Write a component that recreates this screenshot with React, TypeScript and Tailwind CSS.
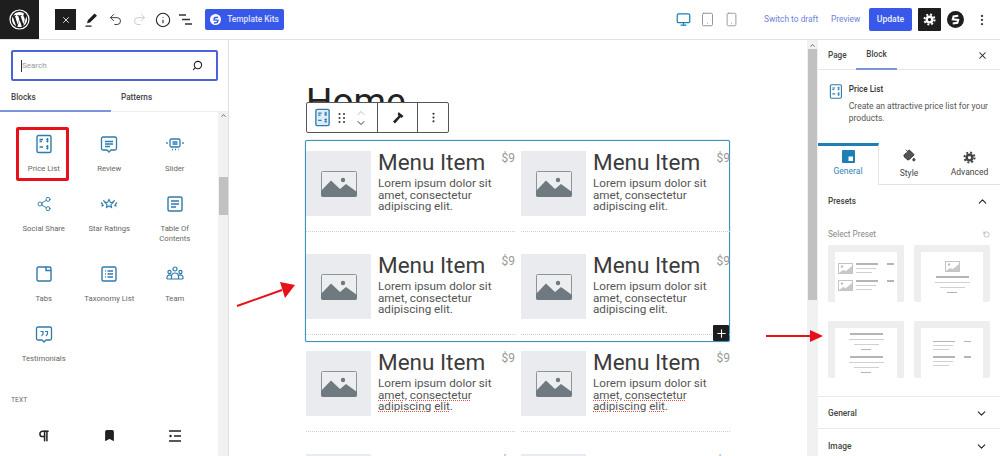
import React from "react";
import {
  Bookmark,
  ChevronDown,
  ChevronUp,
  EllipsisVertical,
  Info,
  Monitor,
  PaintBucket,
  Pilcrow,
  Plus,
  Redo2,
  RotateCcw,
  Search,
  Share2,
  Smartphone,
  Tablet,
  Undo2,
  X,
} from "lucide-react";

const BLUE = "#2f7bab";

const PriceIcon = ({ size = 20, fill = "none" }: { size?: number; fill?: string }) => (
  <svg width={size} height={size} viewBox="0 0 20 20" fill={fill} stroke={BLUE} strokeWidth="1.4">
    <rect x="3" y="1.500" width="14" height="17" rx="1.500" />
    <path d="M5.500 5.500h3.500M5.500 7.500h2.500M5.500 13h3.500" strokeWidth="1.300" />
    <path d="M13.500 4v4.500M12 5.200h2.600M12 7.200h2.600M13.500 11v4.500M12 12.200h2.600M12 14.200h2.600" strokeWidth="1.100" />
  </svg>
);

const ReviewIcon = () => (
  <svg width="20" height="20" viewBox="0 0 20 20" fill="none" stroke={BLUE} strokeWidth="1.300">
    <path d="M4 3h12a1.500 1.500 0 0 1 1.500 1.500v10a1.500 1.500 0 0 1-1.500 1.500h-4l-2 2-2-2H4a1.500 1.500 0 0 1-1.500-1.500v-10A1.500 1.500 0 0 1 4 3z" />
    <path d="M6 7.500h8M6 10h8M6 12.500h5" />
  </svg>
);

const SliderIcon = () => (
  <svg width="20" height="20" viewBox="0 0 20 20" fill="none" stroke={BLUE} strokeWidth="1.300">
    <rect x="5" y="5" width="10" height="8" rx="1.500" />
    <path d="M7.500 8h5M7.500 10h5M2 8v2M18 8v2M7 15.500h1M10 15.500h1M13 15.500h.5" />
  </svg>
);

const StarsIcon = () => (
  <svg width="20" height="20" viewBox="0 0 20 20" fill="none" stroke={BLUE} strokeWidth="1.100">
    <path d="M10 5.500l1.300 2.700 2.700.4-2 2 .5 2.800-2.500-1.400-2.500 1.400.5-2.800-2-2 2.700-.4z" />
    <path d="M4.500 6l.9 1.800 1.600.2M2 8.500l1.400 1.500-.3 2 1.700-.9M15.500 6l-.9 1.800-1.600.2M18 8.500L16.600 10l.3 2-1.700-.9" />
  </svg>
);

const TocIcon = () => (
  <svg width="20" height="20" viewBox="0 0 20 20" fill="none" stroke={BLUE} strokeWidth="1.400">
    <rect x="3" y="3" width="14" height="14" rx="1.500" />
    <path d="M6 7h8M6 10h8M6 13h5" />
  </svg>
);

const TabsIcon = () => (
  <svg width="20" height="20" viewBox="0 0 20 20" fill="none" stroke={BLUE} strokeWidth="1.400">
    <rect x="3" y="3" width="14" height="14" rx="1.500" />
    <path d="M12 3v3.500h5" />
  </svg>
);

const TaxonomyIcon = () => (
  <svg width="20" height="20" viewBox="0 0 20 20" fill="none" stroke={BLUE} strokeWidth="1.400">
    <rect x="3" y="3" width="14" height="14" rx="1.500" />
    <path d="M8.500 7H14M8.500 10H14M8.500 13H14M6 7h.8M6 10h.8M6 13h.8" />
  </svg>
);

const TeamIcon = () => (
  <svg width="20" height="20" viewBox="0 0 20 20" fill="none" stroke={BLUE} strokeWidth="1.200">
    <circle cx="10" cy="5" r="2" />
    <circle cx="4.500" cy="8" r="1.600" />
    <circle cx="15.500" cy="8" r="1.600" />
    <path d="M6.500 15v-2.500a3.500 3.500 0 0 1 7 0V15zM2 15v-2a2.500 2.500 0 0 1 4-1.500M18 15v-2a2.500 2.500 0 0 0-4-1.500M2 15h16" />
  </svg>
);

const QuoteIcon = () => (
  <svg width="20" height="20" viewBox="0 0 20 20" fill="none" stroke={BLUE} strokeWidth="1.300">
    <path d="M4 3h12a1.500 1.500 0 0 1 1.500 1.500v10a1.500 1.500 0 0 1-1.500 1.500h-4l-2 2-2-2H4a1.500 1.500 0 0 1-1.500-1.500v-10A1.500 1.500 0 0 1 4 3z" />
    <path d="M6.500 7.500h2.500v2.500l-1.500 2M11 7.500h2.500v2.500l-1.500 2" strokeWidth="1.200" />
  </svg>
);

const Gear = ({ size, color, hole }: { size: number; color: string; hole: number }) => (
  <svg width={size} height={size} viewBox="0 0 16 16" fill="none" stroke={color}>
    <circle cx="8" cy="8" r={hole} strokeWidth="3" />
    <circle cx="8" cy="8" r="6.200" strokeWidth="2.400" strokeDasharray="2.400 2.470" />
  </svg>
);

const BoltS = ({ size, color }: { size: number; color: string }) => (
  <svg width={size} height={size} viewBox="0 0 10 10" fill="none" stroke={color} strokeWidth="1.800">
    <path d="M7.500 1.500L3.200 2.200 2.500 4.800l5 .6-.8 2.600-4.200.7" />
  </svg>
);

const blockRows = [
  [
    { label: "Price List", icon: <PriceIcon /> },
    { label: "Review", icon: <ReviewIcon /> },
    { label: "Slider", icon: <SliderIcon /> },
  ],
  [
    { label: "Social Share", icon: <Share2 size={16} color={BLUE} strokeWidth={1.4} /> },
    { label: "Star Ratings", icon: <StarsIcon /> },
    { label: "Table Of\nContents", icon: <TocIcon /> },
  ],
  [
    { label: "Tabs", icon: <TabsIcon /> },
    { label: "Taxonomy List", icon: <TaxonomyIcon /> },
    { label: "Team", icon: <TeamIcon /> },
  ],
  [{ label: "Testimonials", icon: <QuoteIcon /> }],
];

const ImagePlaceholder = () => (
  <div className="w-[65px] h-[65px] shrink-0 bg-[#e9ebee] flex items-center justify-center">
    <svg width="36" height="26" viewBox="0 0 36 26">
      <rect x="0.500" y="0.500" width="35" height="25" rx="1" fill="#eceef0" stroke="#8a9499" />
      <circle cx="22" cy="9" r="2.200" fill="#6f7a80" />
      <path d="M0 24V20L10 9.500 19 18l6-5 11 8v3a2 2 0 0 1-2 2H2a2 2 0 0 1-2-2z" fill="#6f7a80" />
    </svg>
  </div>
);

const Squiggle = ({ children }: { children: React.ReactNode }) => (
  <span className="underline decoration-dotted decoration-[#e2504f] decoration-[1px] underline-offset-[1px]">
    {children}
  </span>
);

const MenuItem = ({ spell }: { spell?: boolean }) => (
  <div className="h-[81px] flex items-start border-b border-dotted border-[#cfcfcf]">
    <ImagePlaceholder />
    <div className="ml-[7px] flex-1 -mt-[1px]">
      <div className="flex justify-between">
        <div className="text-[22.500px] leading-[25px] text-[#3c3c3c]">Menu Item</div>
        <div className="text-[12px] leading-[16px] text-[#999]">$9</div>
      </div>
      <div className="text-[11.700px] leading-[11.500px] mt-[3px] text-[#555]">
        {spell ? (
          <>
            Lorem ipsum dolor sit <Squiggle>amet</Squiggle>, <Squiggle>consectetur</Squiggle>{" "}
            <Squiggle>adipiscing</Squiggle> <Squiggle>elit</Squiggle>.
          </>
        ) : (
          "Lorem ipsum dolor sit amet, consectetur adipiscing elit."
        )}
      </div>
    </div>
  </div>
);

const PriceGrid = ({ spell }: { spell?: boolean }) => (
  <div className="grid grid-cols-[209px_209px] gap-x-[6px] gap-y-[22px]">
    <MenuItem spell={spell} />
    <MenuItem spell={spell} />
    <MenuItem />
    <MenuItem />
  </div>
);

const Line = ({ w, dark }: { w: number; dark?: boolean }) => (
  <div className={dark ? "h-[1.500px] bg-[#b5b5b5]" : "h-[1px] bg-[#d0d0d0]"} style={{ width: w }} />
);

const MiniImg = () => (
  <svg width="15" height="11" viewBox="0 0 15 11" className="shrink-0">
    <rect x="0.500" y="0.500" width="14" height="10" fill="#fff" stroke="#c4c4c4" />
    <circle cx="4" cy="3.500" r="1.200" fill="#bdbdbd" />
    <path d="M1 10l4-3 3 1 6-5v7z" fill="#c8c8c8" />
  </svg>
);

const MiniRow = ({ img }: { img?: boolean }) => (
  <div className="flex gap-[3px]">
    {img && <MiniImg />}
    <div className="flex flex-col gap-[3px]">
      <Line w={22} dark />
      <Line w={20} />
      <Line w={16} />
    </div>
    <div className="ml-[6px]">
      <Line w={7} dark />
    </div>
  </div>
);

const MiniCenter = ({ withImg }: { withImg?: boolean }) => (
  <div className="flex flex-col items-center gap-[4px]">
    {withImg && <MiniImg />}
    <Line w={33} dark />
    <Line w={35} />
    <Line w={25} />
    <Line w={10} dark />
  </div>
);

const PresetCard = ({ children }: { children: React.ReactNode }) => (
  <div className="h-[57px] bg-[#eeeeee] rounded-[2px] px-[7px] pt-[7px]">
    <div className="h-full bg-white flex flex-col items-center justify-center gap-[6px]">{children}</div>
  </div>
);

export default function App() {
  return (
    <div
      className="relative w-[1000px] h-[456px] overflow-hidden bg-white text-[#444]"
      style={{ fontFamily: "Roboto, 'Noto Sans', sans-serif" }}
    >
      {/* Top bar */}
      <header className="h-[40px] flex items-center border-b border-[#e4e4e4]">
        <div className="w-[39px] h-[39px] bg-[#1e1e1e] flex items-center justify-center">
          <svg width="21" height="21" viewBox="0 0 21 21">
            <circle cx="10.500" cy="10.500" r="9.500" fill="none" stroke="#fff" strokeWidth="1.200" />
            <path
              d="M3 10.500c0 3 1.700 5.500 4.200 6.700L3.700 7.400c-.4 1-.7 2-.7 3.100zm12.600-.4c0-.9-.3-1.600-.6-2.100-.4-.6-.7-1.100-.7-1.700 0-.7.500-1.300 1.200-1.300h.1A7.500 7.500 0 0 0 4.200 6.400h.5c.8 0 2-.1 2-.1.400 0 .5.600.1.600 0 0-.4.100-.9.100l2.800 8.400 1.700-5.100-1.200-3.300c-.4 0-.8-.1-.8-.1-.4 0-.4-.6 0-.6 0 0 1.300.1 2 .1.800 0 2-.1 2-.1.400 0 .5.600.1.600 0 0-.4.100-.9.100l2.800 8.300.8-2.600c.3-1.100.6-1.900.6-2.600zM10.600 11.100l-2.300 6.700a7.500 7.500 0 0 0 4.600-.1l-.1-.1zM17 6.900l.1.800c0 .8-.1 1.600-.6 2.800l-2.300 6.700A7.500 7.500 0 0 0 17 6.900z"
              fill="#fff"
            />
          </svg>
        </div>
        <div className="ml-[16px] w-[21px] h-[21px] bg-[#1e1e1e] flex items-center justify-center">
          <X size={10} color="#fff" strokeWidth={2} />
        </div>
        <svg className="ml-[7px]" width="16" height="16" viewBox="0 0 16 16" fill="#1e1e1e">
          <path d="M11.500 1.500l2.500 2.200-7 6.800-3 .8.800-3zM2.500 13.500h6v1.300h-6z" />
        </svg>
        <Undo2 className="ml-[9px]" size={15} color="#333" strokeWidth={1.500} />
        <Redo2 className="ml-[9px]" size={15} color="#c8c8c8" strokeWidth={1.500} />
        <Info className="ml-[8px]" size={16} color="#222" strokeWidth={1.600} />
        <svg className="ml-[7px]" width="15" height="15" viewBox="0 0 15 15" stroke="#333" strokeWidth="1.500">
          <path d="M1 3h7M4 7.500h8M7 12h7" />
        </svg>
        <div className="ml-[12px] w-[79px] h-[21px] bg-[#3858e9] rounded-[2px] flex items-center justify-center gap-[6px] text-[#dfe5fd] text-[8.400px] font-medium">
          <span className="w-[11px] h-[11px] rounded-full bg-white flex items-center justify-center">
            <BoltS size={8} color="#3858e9" />
          </span>
          Template Kits
        </div>
        <Monitor className="ml-[392px]" size={15} color="#1e7fb5" strokeWidth={2} />
        <Tablet className="ml-[9px]" size={15} color="#8f8f8f" strokeWidth={1.500} />
        <Smartphone className="ml-[9px]" size={15} color="#8f8f8f" strokeWidth={1.400} />
        <span className="ml-[25px] w-[54px] whitespace-nowrap text-[8.400px] text-[#6f82d8]">Switch to draft</span>
        <span className="ml-[13px] w-[29px] whitespace-nowrap text-[8.400px] text-[#6f82d8]">Preview</span>
        <div className="ml-[9px] w-[43px] h-[23px] bg-[#3858e9] rounded-[2px] flex items-center justify-center text-[#eef1fe] text-[8.600px] font-medium">
          Update
        </div>
        <div className="ml-[6px] w-[23px] h-[23px] bg-[#1e1e1e] rounded-[1px] flex items-center justify-center">
          <Gear size={13} color="#fff" hole={3.500} />
        </div>
        <div className="ml-[6px] w-[17px] h-[17px] rounded-full bg-[#1e1e1e] flex items-center justify-center">
          <BoltS size={11} color="#fff" />
        </div>
        <EllipsisVertical className="ml-[11px]" size={14} color="#444" strokeWidth={2} />
      </header>

      <div className="flex h-[416px]">
        {/* Block inserter */}
        <aside className="w-[229px] shrink-0 border-r border-[#e0e0e0] flex flex-col">
          <div className="ml-[11px] mr-[10px] mt-[10px] h-[31px] border-2 border-[#4a63d8] rounded-[2px] flex items-center justify-between pl-[8px] pr-[13px]">
            <span className="text-[8px] text-[#999] border-l border-[#333] leading-[12px]">Search</span>
            <Search size={11} color="#222" strokeWidth={2.400} className="-scale-x-100" />
          </div>
          <div className="h-[31px] flex text-[8.200px] font-medium text-[#444] shrink-0">
            <div className="w-[111px] border-b-[2px] border-[#7f93db] pl-[11px] pt-[10px]">Blocks</div>
            <div className="flex-1 border-b border-[#eeeeee] pl-[10px] pt-[10px]">Patterns</div>
          </div>
          <div className="flex flex-1 min-h-0">
            <div className="flex-1 pl-[11px] pt-[20px] overflow-hidden">
              {blockRows.map((row, i) => (
                <div key={i} className="grid grid-cols-[repeat(3,65.500px)]">
                  {row.map((b) => (
                    <div key={b.label} className="flex flex-col items-center" style={{ height: i === 1 ? 70 : 60 }}>
                      <div className="h-[24px] flex items-center justify-center">{b.icon}</div>
                      <div className="mt-[8px] text-[7.700px] leading-[10px] text-center whitespace-pre-line text-[#666]">{b.label}</div>
                    </div>
                  ))}
                </div>
              ))}
              <div className="h-[47px] pt-[13px] text-[6.800px] leading-[10px] text-[#666]">TEXT</div>
              <div className="grid grid-cols-[repeat(3,65.500px)] text-[#222]">
                <div className="flex justify-center">
                  <Pilcrow size={14} color="#222" strokeWidth={2.600} />
                </div>
                <div className="flex justify-center">
                  <Bookmark size={13} color="#222" fill="#222" />
                </div>
                <div className="flex justify-center">
                  <svg width="14" height="14" viewBox="0 0 14 14" stroke="#222" strokeWidth="1.300">
                    <path d="M1 2h12M6 7h7M1 12h12" />
                    <circle cx="2.500" cy="7" r="1.200" fill="#222" stroke="none" />
                  </svg>
                </div>
              </div>
            </div>
            <div className="w-[10px] shrink-0 bg-[#f1f1f1] flex flex-col items-center">
              <ChevronUp size={7} color="#555" strokeWidth={3} />
              <div className="w-[9px] h-[38px] mt-[58px] bg-[#c1c1c1]" />
            </div>
          </div>
        </aside>

        {/* Canvas */}
        <main className="w-[578px] shrink-0 relative pl-[76px] overflow-hidden">
          <h1 className="h-[100px] pt-[39px] pl-[1px] text-[37px] leading-[46px] text-[#222]">Home</h1>
          <div className="relative w-[425px] h-[202px] border border-[#3a93bf] shadow-[0_0_1px_#3a93bf] rounded-[2px] pt-[10px] bg-white">
            <PriceGrid />
            <div className="absolute right-0 bottom-0 w-[16px] h-[16px] bg-[#1e1e1e] rounded-[1px] flex items-center justify-center">
              <Plus size={13} color="#fff" strokeWidth={2} />
            </div>
          </div>
          <div className="w-[425px] pl-[1px] pt-[9px]">
            <PriceGrid spell />
          </div>

          {/* Block toolbar */}
          <div className="absolute left-[77px] top-[62px] h-[31px] w-[143px] border border-[#555] rounded-[2px] bg-white flex items-center">
            <div className="w-[71px] h-full flex items-center border-r border-[#555] pl-[6px]">
              <PriceIcon size={19} fill="#dcedf7" />
              <svg className="ml-[6px]" width="8" height="12" viewBox="0 0 8 12" fill="#333">
                <circle cx="1.500" cy="2" r="1" />
                <circle cx="6" cy="2" r="1" />
                <circle cx="1.500" cy="6" r="1" />
                <circle cx="6" cy="6" r="1" />
                <circle cx="1.500" cy="10" r="1" />
                <circle cx="6" cy="10" r="1" />
              </svg>
              <div className="ml-[9px] flex flex-col items-center -space-y-[2px]">
                <ChevronUp size={12} color="#aaa" strokeWidth={1.500} />
                <ChevronDown size={12} color="#222" strokeWidth={1.800} />
              </div>
            </div>
            <div className="w-[40px] h-full flex items-center justify-center border-r border-[#555]">
              <svg width="14" height="14" viewBox="0 0 14 14" fill="#222">
                <path d="M7.500 1l5 4-2 2-1-.8L4 12.500 2 10.500 7.700 4.800l-1-.9z" />
              </svg>
            </div>
            <div className="flex-1 flex items-center justify-center">
              <EllipsisVertical size={13} color="#333" strokeWidth={2} />
            </div>
          </div>
        </main>

        {/* Canvas scrollbar */}
        <div className="w-[11px] shrink-0 bg-[#f1f1f1] flex flex-col items-center">
          <ChevronUp size={7} color="#555" strokeWidth={3} className="mt-[2px]" />
          <div className="w-[9px] h-[251px] bg-[#c1c1c1]" />
        </div>

        {/* Settings sidebar */}
        <aside className="flex-1 min-w-0">
          <div className="h-[30px] flex items-center border-b border-[#e8e8e8] text-[8.200px] font-medium text-[#444] pl-[10px] pr-[12px] pt-[1px]">
            <span className="w-[18px] whitespace-nowrap">Page</span>
            <span className="ml-[10px] h-[30px] w-[41px] flex items-center justify-center border-b-[2px] border-[#7f93db]">Block</span>
            <X size={11} color="#222" strokeWidth={2.200} className="ml-auto" />
          </div>
          <div className="flex pl-[10px] pr-[4px] pt-[12px] h-[73px]">
            <PriceIcon size={19} />
            <div className="ml-[5px] min-w-0">
              <div className="text-[8.200px] font-medium leading-[14px] text-[#333]">Price List</div>
              <div className="mt-[4px] text-[8.500px] leading-[12px] text-[#555]">
                Create an attractive price list for your products.
              </div>
            </div>
          </div>
          <div className="h-[42px] flex">
            <div className="w-[61px] border-t-[3px] border-[#1e7fb5] border-r border-r-[#e4e4e4] flex flex-col items-center pt-[4px] text-[8.500px] text-[#2f87b8]">
              <svg width="13" height="13" viewBox="0 0 13 13">
                <rect width="13" height="13" rx="1" fill="#1e7fb5" />
                <rect x="6.500" y="6.500" width="4.500" height="4.500" fill="#fff" />
              </svg>
              <span className="mt-[2px] leading-[12px]">General</span>
            </div>
            <div className="w-[60px] border-b border-[#e4e4e4] flex flex-col items-center pt-[6px] text-[8.500px] text-[#444]">
              <PaintBucket size={13} color="#333" fill="#555" strokeWidth={1.800} />
              <span className="mt-[5px] leading-[12px]">Style</span>
            </div>
            <div className="flex-1 border-b border-[#e4e4e4] flex flex-col items-center pt-[8px] text-[8.500px] text-[#444]">
              <Gear size={13} color="#444" hole={3.500} />
              <span className="mt-[2px] leading-[12px]">Advanced</span>
            </div>
          </div>
          <div className="px-[10px]">
            <div className="h-[33px] flex items-center justify-between text-[8.200px] font-medium text-[#444]">
              Presets
              <ChevronUp size={13} color="#222" strokeWidth={2} className="mr-[1px]" />
            </div>
            <div className="h-[27px] flex items-center justify-between text-[8.200px] text-[#888] pt-[5px]">
              Select Preset
              <RotateCcw size={7} color="#999" strokeWidth={2} />
            </div>
            <div className="grid grid-cols-[76px_76px] gap-x-[10px] gap-y-[19px]">
              <PresetCard>
                <MiniRow img />
                <MiniRow img />
              </PresetCard>
              <PresetCard>
                <MiniCenter withImg />
              </PresetCard>
              <PresetCard>
                <MiniCenter />
                <MiniCenter />
              </PresetCard>
              <PresetCard>
                <MiniRow />
                <MiniRow />
              </PresetCard>
            </div>
          </div>
          <div className="mt-[18px] h-[32px] border-t border-[#e8e8e8] flex items-center justify-between pl-[10px] pr-[12px] pt-[2px] text-[8.400px] font-medium text-[#444]">
            General
            <ChevronDown size={13} color="#222" strokeWidth={2} />
          </div>
          <div className="h-[33px] border-t border-[#e8e8e8] flex items-center justify-between pl-[10px] pr-[12px] pt-[2px] text-[8.400px] font-medium text-[#444]">
            Image
            <ChevronDown size={13} color="#222" strokeWidth={2} />
          </div>
        </aside>
      </div>

      {/* Annotations drawn on top of the screenshot */}
      <div className="absolute left-[16px] top-[127px] w-[53px] h-[54px] border-[3px] border-[#e8101a] rounded-[2px]" />
      <svg className="absolute left-[230px] top-[275px]" width="70" height="40" viewBox="0 0 70 40">
        <path d="M7 31L52 15" stroke="#e8101a" strokeWidth="2" />
        <path d="M65 10L50 7l5 16z" fill="#e8101a" />
      </svg>
      <svg className="absolute left-[760px] top-[325px]" width="70" height="22" viewBox="0 0 70 22">
        <path d="M6 11h46" stroke="#e8101a" strokeWidth="2" />
        <path d="M63 11L50 5v12z" fill="#e8101a" />
      </svg>
    </div>
  );
}
